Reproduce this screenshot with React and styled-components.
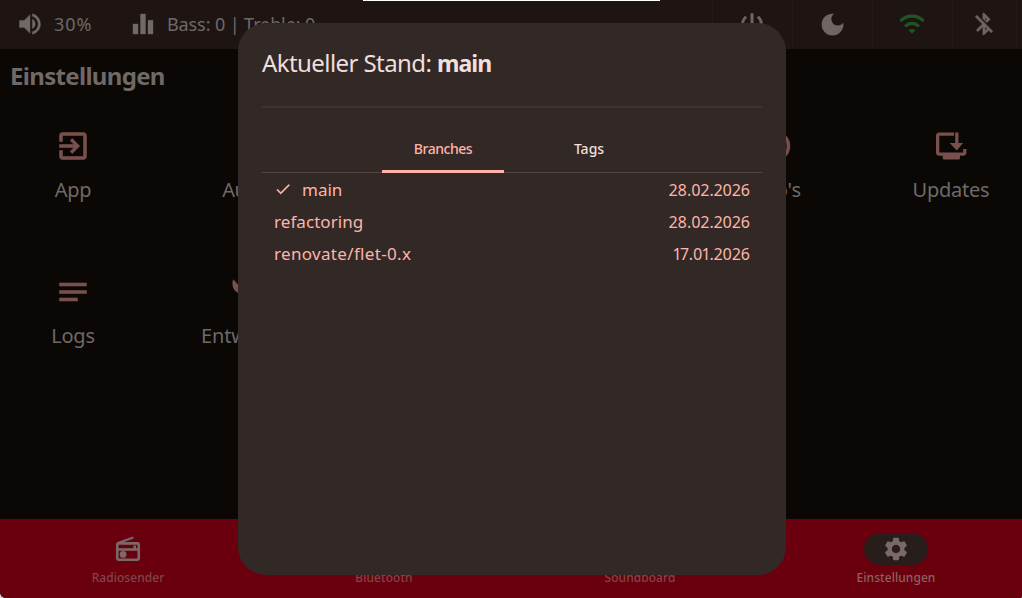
import styled, { createGlobalStyle } from "styled-components";
import {
  MdVolumeUp,
  MdEqualizer,
  MdPowerSettingsNew,
  MdDarkMode,
  MdBluetoothDisabled,
  MdExitToApp,
  MdNotes,
  MdBluetooth,
  MdMusicNote,
  MdSettings,
  MdCheck,
  MdOutlineInfo,
} from "react-icons/md";

// ==================== GLOBAL ====================
const GlobalStyle = createGlobalStyle`
  * { box-sizing: border-box; }
  body {
    margin: 0;
    background: #d8d0d0;
    font-family: "Noto Sans", sans-serif;
    overflow: hidden;
  }
  svg path[fill="none"]:not([stroke]) { stroke: none; }
`;

const Page = styled.div`
  position: relative;
  width: 1022px;
  height: 598px;
  display: flex;
  flex-direction: column;
  overflow: hidden;
  border-radius: 0 0 2px 6px;
  background: #0b0705;
  color: #6f6967;
`;

// ==================== TOP BAR ====================
const TopBar = styled.header`
  height: 49px;
  flex: none;
  display: flex;
  align-items: center;
  padding-right: 5px;
  background: #1e1513;
`;

const Status = styled.div`
  width: ${({ $width }) => $width}px;
  padding: 0 0 2px ${({ $pad }) => $pad}px;
  display: flex;
  align-items: center;
  gap: ${({ $gap }) => $gap}px;
  font-size: 18px;
  white-space: nowrap;
  letter-spacing: ${({ $track }) => $track || 0}px;
  svg { flex: none; stroke-width: 0.3; }
`;

const Actions = styled.div`
  margin-left: auto;
  height: 100%;
  display: flex;
  border-right: 1px solid #231a18;
`;

const Action = styled.div`
  width: ${({ $width }) => $width || 80}px;
  padding: 0 1px 1px 0;
  display: flex;
  align-items: center;
  justify-content: center;
  border-left: 1px solid #231a18;
  color: ${({ $color }) => $color || "#6f6664"};
  svg { stroke-width: ${({ $bold }) => $bold || 0}; }
`;

// ==================== CONTENT ====================
const Title = styled.h1`
  margin: 0;
  padding: 10px 0 0 10px;
  height: 66px;
  font-size: 24px;
  line-height: 34px;
  font-weight: 700;
  letter-spacing: -0.68px;
`;

const Grid = styled.div`
  flex: 1;
  display: grid;
  grid-template-columns: repeat(6, 126px);
  grid-auto-rows: 146px;
  justify-content: space-between;
  padding: 0 8px 0 10px;
`;

const Tile = styled.div`
  grid-column: ${({ $column }) => $column};
  display: flex;
  flex-direction: column;
  align-items: center;
  padding-top: 13px;
  gap: 11px;
  font-size: 20px;
  line-height: 29px;
  letter-spacing: ${({ $track }) => $track ?? -0.25}px;
  svg { color: #79504c; stroke-width: 0.4; }
`;

// ==================== BOTTOM NAV ====================
const Nav = styled.nav`
  height: 79px;
  flex: none;
  display: grid;
  grid-template-columns: repeat(4, 256px);
  background: #6a000e;
`;

const NavItem = styled.div`
  display: flex;
  flex-direction: column;
  align-items: center;
  padding-top: 14px;
  gap: 4px;
  font-size: 12px;
  line-height: 18px;
  font-weight: 500;
  letter-spacing: 0.05px;
  color: ${({ $active }) => ($active ? "#8b6261" : "#80464a")};
`;

const Pill = styled.div`
  width: 64px;
  height: 32px;
  border-radius: 16px;
  display: flex;
  align-items: center;
  justify-content: center;
  color: #7b6967;
  background: ${({ $active }) => ($active ? "#281d1b" : "transparent")};
`;

// ==================== DIALOG ====================
const Dialog = styled.section`
  position: absolute;
  left: 238px;
  top: 23px;
  width: 548px;
  height: 552px;
  padding: 23px 24px;
  border-radius: 28px;
  background: #322927;
`;

const DialogTitle = styled.h2`
  margin: 0;
  height: 60px;
  font-size: 24px;
  line-height: 34px;
  font-weight: 400;
  letter-spacing: -0.58px;
  color: #f0dfdb;
  b {
    font-size: 23px;
    letter-spacing: -0.9px;
  }
`;

const Divider = styled.div`
  height: 2px;
  background: #3e3331;
`;

const Tabs = styled.div`
  height: 65px;
  display: flex;
  justify-content: center;
  gap: 24px;
  padding: 16px 0 0 8px;
  border-bottom: 1px solid #524441;
`;

const Tab = styled.div`
  width: 122px;
  height: 49px;
  padding-top: 2px;
  display: flex;
  align-items: center;
  justify-content: center;
  font-size: 14px;
  font-weight: 500;
  letter-spacing: ${({ $active }) => ($active ? "-0.45px" : "0")};
  color: ${({ $active }) => ($active ? "#ffb4a9" : "#f0dfdb")};
  border-bottom: 3px solid ${({ $active }) => ($active ? "#ffb4a9" : "transparent")};
`;

const Row = styled.div`
  height: 32px;
  padding: 0 12px;
  display: flex;
  align-items: center;
  font-size: 17px;
  letter-spacing: ${({ $track }) => $track || 0}px;
  color: #ffb4a9;
  svg { margin-right: 10px; stroke-width: 0.3; }
`;

const DateText = styled.span`
  margin-left: auto;
  padding-top: 1px;
  font-size: 16px;
  letter-spacing: 0;
  font-variant-numeric: proportional-nums;
`;

const TopLine = styled.div`
  position: absolute;
  left: 363px;
  top: 0;
  width: 297px;
  height: 1px;
  background: #ffffff;
`;

// ==================== ICONS ====================
const WifiIcon = () => (
  <svg width="28" height="28" viewBox="0 0 24 24" fill="none" stroke="currentColor" strokeLinecap="round">
    <path stroke="currentColor" d="M2.9 8.700c5.200-4.600 13-4.600 18.200 0" />
    <path stroke="currentColor" d="M7 13.300c2.900-2.400 7.100-2.400 10 0" />
    <path d="M9 17.400c1.700-1.600 4.300-1.600 6 0L12 20.400z" fill="currentColor" stroke="none" />
  </svg>
);

const RadioIcon = () => (
  <svg width="28" height="28" viewBox="0 0 24 24" fill="none" stroke="currentColor" strokeWidth="2.2">
    <rect x="2.8" y="7.200" width="18.400" height="14" rx="1.200" />
    <path stroke="currentColor" strokeLinecap="round" strokeWidth="1.800" d="M3.400 6.800 16 2.400" />
    <path stroke="currentColor" d="M3 12.400h18M17.800 9v3" />
    <circle cx="7.800" cy="16.700" r="2.900" fill="currentColor" stroke="none" />
  </svg>
);

const UpdateIcon = ({ size }) => (
  <svg width={size} height={size} viewBox="0 0 24 24" fill="currentColor">
    <path d="M14 3H4c-1.100 0-2 .9-2 2v11.500c0 1.100.9 2 2 2h2.500V20c0 .6.4 1 1 1H17c.6 0 1-.4 1-1v-1.500h2.300c1.100 0 2-.9 2-2V14h-2.200v2.400H4.200V5.100H14z" />
    <path d="M14.800 3H17v7h3.100l-4.200 5-4.800-5h3.700z" />
  </svg>
);

const WrenchIcon = ({ size }) => (
  <svg width={size} height={size} viewBox="0 0 24 24" fill="currentColor">
    <path d="M1.500 3.500C.4 6.200.9 9.400 3.100 11.500c2 2 4.700 2.500 7 1.600l8.800 8.400 2.800-2.800-8.700-8.700c.9-2.300.4-5-1.600-7L8 6.500l-2 2z" />
  </svg>
);

const tiles = [
  { label: "App", icon: MdExitToApp, column: 1 },
  { label: "Audio", icon: MdMusicNote, column: 2, track: -0.4 },
  { label: "Info's", icon: MdOutlineInfo, column: 5, track: 0 },
  { label: "Updates", icon: UpdateIcon, column: 6 },
  { label: "Logs", icon: MdNotes, column: 1 },
  { label: "Entwickler", icon: WrenchIcon, column: 2, track: -0.15 },
];

const navItems = [
  { label: "Radiosender", icon: RadioIcon },
  { label: "Bluetooth", icon: MdBluetooth },
  { label: "Soundboard", icon: MdMusicNote },
  { label: "Einstellungen", icon: MdSettings, active: true },
];

const branches = [
  { name: "main", date: "28.02.2026", current: true },
  { name: "refactoring", date: "28.02.2026", track: 0.07 },
  { name: "renovate/flet-0.x", date: "17.01.2026", track: 0.33 },
];

// ==================== MAIN COMPONENT ====================
const App = () => (
  <>
    <GlobalStyle />
    <Page>
      <TopBar>
        <Status $width={113} $pad={16} $gap={10} $track={0.9}>
          <MdVolumeUp size={28} />
          30%
        </Status>
        <Status $width={230} $pad={15} $gap={9} $track={-0.1}>
          <MdEqualizer size={30} />
          Bass: 0 | Treble: 0
        </Status>
        <Actions>
          <Action $bold={0.5}><MdPowerSettingsNew size={28} /></Action>
          <Action><MdDarkMode size={29} /></Action>
          <Action $color="#1f5424" $bold={2.8}><WifiIcon /></Action>
          <Action $width={64} $bold={0.6}><MdBluetoothDisabled size={26} /></Action>
        </Actions>
      </TopBar>
      <Title>Einstellungen</Title>
      <Grid>
        {tiles.map(({ label, icon: Icon, column, track }) => (
          <Tile key={label} $column={column} $track={track}>
            <Icon size={36} />
            {label}
          </Tile>
        ))}
      </Grid>
      <Nav>
        {navItems.map(({ label, icon: Icon, active }) => (
          <NavItem key={label} $active={active}>
            <Pill $active={active}><Icon size={28} /></Pill>
            {label}
          </NavItem>
        ))}
      </Nav>

      <Dialog>
        <DialogTitle>Aktueller Stand: <b>main</b></DialogTitle>
        <Divider />
        <Tabs>
          <Tab $active>Branches</Tab>
          <Tab>Tags</Tab>
        </Tabs>
        {branches.map(({ name, date, current, track }) => (
          <Row key={name} $track={track}>
            {current && <MdCheck size={18} />}
            {name}
            <DateText>{date}</DateText>
          </Row>
        ))}
      </Dialog>
      <TopLine />
    </Page>
  </>
);

export default App;
